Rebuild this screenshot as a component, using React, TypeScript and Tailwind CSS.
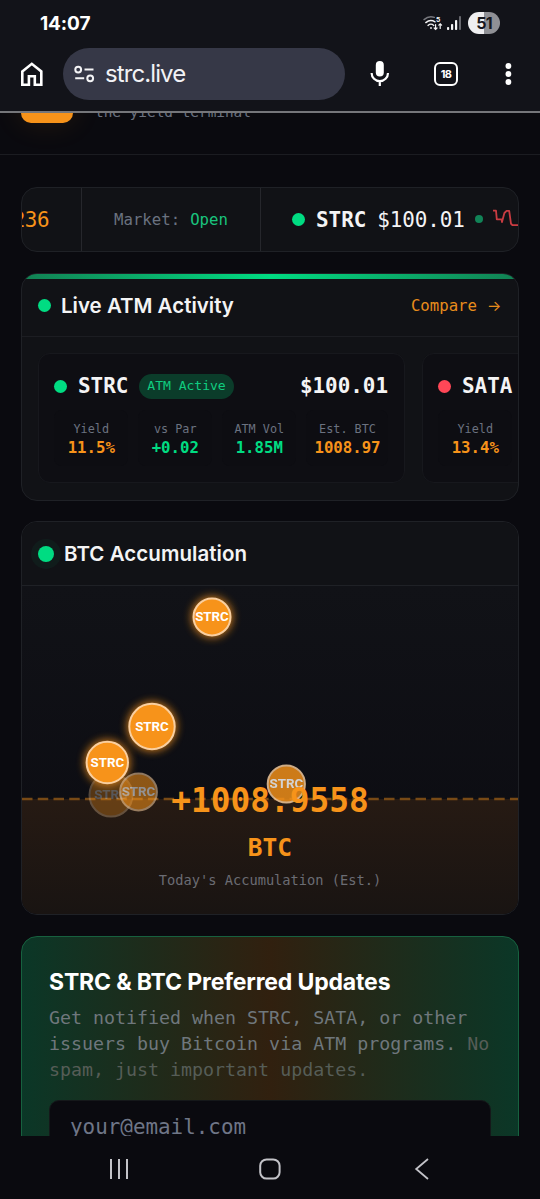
import type { ReactNode } from "react";
import { clsx } from "clsx";

const MONO = "font-['DejaVu_Sans_Mono','Liberation_Mono',monospace]";
const DISPLAY = "font-['Inter','Liberation_Sans',sans-serif]";

type Stat = { label: string; value: string; tone: "orange" | "green" };

const strcStats: Stat[] = [
  { label: "Yield", value: "11.5%", tone: "orange" },
  { label: "vs Par", value: "+0.02", tone: "green" },
  { label: "ATM Vol", value: "1.85M", tone: "green" },
  { label: "Est. BTC", value: "1008.97", tone: "orange" },
];

// only the first cell fits in the scroll area
const sataStats: Stat[] = [{ label: "Yield", value: "13.4%", tone: "orange" }];

// coordinates are relative to the chart area
const bubbles = [
  { x: 190, y: 31, r: 18.5, opacity: 1, glow: true },
  { x: 130, y: 140.5, r: 22.7, opacity: 1, glow: true },
  { x: 89, y: 209, r: 21.5, opacity: 0.3, glow: false },
  { x: 85.3, y: 176.5, r: 20.7, opacity: 1, glow: true },
  { x: 116.5, y: 206, r: 18.4, opacity: 0.55, glow: false },
  { x: 264.3, y: 198, r: 18.6, opacity: 0.82, glow: false },
];

function StatusBar() {
  return (
    <div className="flex h-[46px] items-center justify-between pl-10 pr-10 text-white">
      <span className="font-['Inter',sans-serif] text-[19px] font-bold leading-none tracking-[-0.1px]">
        14:07
      </span>
      <div className="flex items-center">
        <svg width="20" height="17" viewBox="0 0 20 17" fill="none" stroke="#f4f4f5" strokeWidth="1.4" strokeLinecap="round">
          <path d="M1 4.6C4 2 8 1.2 11.3 2.4" stroke="#77787e" />
          <path d="M2.8 7.6C5.6 5.2 9.2 5 12 6.8" />
          <path d="M5 10.4c1.8-1.6 4-1.6 5.8 0" />
          <circle cx="8" cy="13" r="0.9" fill="#f4f4f5" stroke="none" />
          <path d="M12.6 9.5v4.8M11.2 13l1.4 1.4L14 13M17.2 13.4V8.8M15.8 10.2l1.4-1.4 1.4 1.4" strokeWidth="1.2" />
          <text x="13" y="6.8" fill="#f4f4f5" stroke="none" fontSize="7.5" fontWeight="700" fontFamily="Roboto">5</text>
        </svg>
        <svg className="ml-1" width="15" height="16" viewBox="0 0 15 16">
          <rect x="0" y="12" width="2.2" height="3" rx="0.8" fill="#f4f4f5" />
          <rect x="4" y="9" width="2.2" height="6" rx="0.8" fill="#f4f4f5" />
          <rect x="8" y="5" width="2.2" height="10" rx="0.8" fill="#f4f4f5" />
          <rect x="12" y="1" width="2" height="14" rx="0.8" fill="#66676d" />
        </svg>
        <div className="ml-[6px] flex h-[22px] w-8 items-center justify-center rounded-full bg-[linear-gradient(90deg,#efeff1_51%,#8f9095_51%)] font-['Inter',sans-serif] text-[16px] font-bold tracking-[-0.8px] text-[#17181d]">
          51
        </div>
      </div>
    </div>
  );
}

function BrowserBar() {
  return (
    <div className="flex h-[65px] items-start pt-0.5 text-white">
      <svg className="ml-5 mt-3.5" width="24" height="26" viewBox="0 0 24 26" fill="none" stroke="currentColor" strokeWidth="2.6">
        <path d="M2.3 9.4 11.8 1.8 21.3 9.4v13.4h-6.5v-8.6H8.9v8.6H2.3z" />
      </svg>
      <div className="ml-[19px] flex h-[52px] w-[282px] items-center rounded-full bg-[#363847] pl-[11px]">
        <svg width="21" height="18" viewBox="0 0 21 18" fill="none" stroke="#f4f4f6" strokeWidth="2">
          <circle cx="4.2" cy="4.6" r="2.9" />
          <path d="M10.5 4.6h9M1.2 13.3h9" />
          <circle cx="16.2" cy="13.3" r="2.9" />
        </svg>
        <span className="ml-[10px] font-['Inter',sans-serif] text-[24px] leading-none tracking-[-0.9px] text-[#f2f2f5]">
          strc.live
        </span>
      </div>
      <svg className="ml-[25px] mt-[12px]" width="20" height="28" viewBox="0 0 20 28" fill="none">
        <rect x="5.8" y="1" width="8" height="15.6" rx="4" fill="currentColor" />
        <path d="M1.6 13a8.2 8.2 0 0 0 16.4 0M9.8 21v5" stroke="currentColor" strokeWidth="2.2" />
      </svg>
      <div className="ml-[44px] mt-3.5 flex h-[24px] w-6 items-center justify-center rounded-[6px] border-[2.4px] border-white font-['Inter',sans-serif] text-[11px] font-bold leading-none tracking-[-0.6px]">
        18
      </div>
      <svg className="ml-[47px] mt-[14px]" width="7" height="24" viewBox="0 0 7 24" fill="currentColor">
        <circle cx="3.4" cy="4" r="2.9" />
        <circle cx="3.4" cy="12" r="2.9" />
        <circle cx="3.4" cy="20" r="2.9" />
      </svg>
    </div>
  );
}

function SiteHeader() {
  return (
    <div className="flex h-[42px] shrink-0 overflow-hidden border-b border-[#1b1c21]">
      <div className="-mt-10 ml-[21px] h-[50px] w-[52px] rounded-[10px] bg-[#f7931a] shadow-[0_0_30px_rgba(247,147,26,0.12)]" />
      <span className="-mt-[11px] ml-[22px] text-[14.4px] leading-[20px] text-[#6b7280]">
        the yield terminal
      </span>
    </div>
  );
}

function Ticker() {
  return (
    <div className="mt-8 flex h-[65px] shrink-0 items-center overflow-hidden rounded-[16px] border border-[#1f2126] bg-[#111216] text-[20.9px]">
      <div className="flex h-full w-[60px] shrink-0 items-center justify-end border-r border-[#26272c] pr-[32px] pt-0.5 tracking-[-0.5px] text-[#f7931a]">
        236
      </div>
      <div className="flex h-full w-[179px] shrink-0 items-center border-r border-[#26272c] pl-[32px] text-[15.7px]">
        <span className="text-[#6b7280]">Market:</span>
        <span className="ml-[10px] text-[#19c37d]">Open</span>
      </div>
      <div className="flex shrink-0 items-center pl-[31px] text-[#f4f4f5]">
        <span className="size-[13px] rounded-full bg-[#00dc82]" />
        <span className="ml-[11px] pt-0.5 font-bold">STRC</span>
        <span className="ml-[11px] pt-0.5 tracking-[-0.1px]">$100.01</span>
        <span className="ml-[10px] size-2 rounded-full bg-[#118357]" />
        <svg className="ml-[9px]" width="60" height="24" viewBox="0 0 60 24" fill="none" stroke="#c93c42" strokeWidth="1.8" strokeLinejoin="round">
          <path d="M1 3.7h3l.8 8.6h4.8l.4 2.7 2.4-9 2.2-2.2h2.6l1.8 13 1.6 1.4h9l4-9h8" />
        </svg>
      </div>
    </div>
  );
}

function StatCell({ label, value, tone }: Stat) {
  return (
    <div className="flex h-[56px] flex-col items-center rounded-[8px] bg-[#0d0d12] pl-px pt-[11px]">
      <span className="whitespace-nowrap text-[11.8px] leading-[16px] text-[#6b7280]">{label}</span>
      <span
        className={clsx(
          "text-[15.7px] font-bold leading-[21px]",
          tone === "orange" ? "text-[#f7931a]" : "text-[#00dc82]"
        )}
      >
        {value}
      </span>
    </div>
  );
}

type IssuerCardProps = { ticker: string; price?: string; active?: boolean; stats: Stat[] };

function IssuerCard({ ticker, price, active, stats }: IssuerCardProps) {
  return (
    <div className="h-[130px] w-[367px] shrink-0 rounded-[12px] border border-[#17181d] bg-[#0e0e13] pl-[15px] pr-4 pt-[18px]">
      <div className="flex h-[28px] items-center text-[20.9px] font-bold text-[#f4f4f5]">
        <span className={clsx("size-[13px] rounded-full", active ? "bg-[#00dc82]" : "bg-[#ff4757]")} />
        <span className="ml-[11px] pt-0.5">{ticker}</span>
        {active && (
          <span className="ml-[11px] flex h-[25px] items-center rounded-full bg-[#0b3c2a] px-2 text-[13.1px] font-normal tracking-[-0.05px] text-[#10cd80]">
            ATM Active
          </span>
        )}
        <span className="ml-auto pt-0.5">{price}</span>
      </div>
      <div className="mt-[10px] grid grid-cols-[73.5px_73.5px_73.5px_1fr] gap-[10.5px]">
        {stats.map((stat) => (
          <StatCell key={stat.label} {...stat} />
        ))}
      </div>
    </div>
  );
}

function LiveActivity() {
  return (
    <section className="mt-[21px] h-[228px] shrink-0 overflow-hidden rounded-[16px] border border-[#1f2126] bg-[#111216]">
      <div className="h-[5px] bg-[linear-gradient(90deg,#128053,#00dc82_50%,#128053)]" />
      <div className="flex h-[58px] items-center border-b border-[#1c1d22] px-4 pb-1">
        <span className="size-[13px] rounded-full bg-[#00dc82]" />
        <h2 className={clsx(DISPLAY, "ml-[10px] pt-0.5 text-[20.5px] font-semibold text-[#f4f4f5]")}>
          Live ATM Activity
        </h2>
        <a className="ml-auto flex items-center text-[15.7px] text-[#e88c1c]">
          Compare
          <span className="ml-[10px] w-[15px] pt-0.5 font-['Inter',sans-serif] text-[15px]">→</span>
        </a>
      </div>
      <div className="flex gap-[17px] pl-4 pt-4">
        <IssuerCard ticker="STRC" price="$100.01" active stats={strcStats} />
        <IssuerCard ticker="SATA" stats={sataStats} />
      </div>
    </section>
  );
}

function Accumulation() {
  return (
    <section className="mt-[20px] h-[394px] shrink-0 overflow-hidden rounded-[16px] border border-[#1f2126] bg-[#0f0f14]">
      <div className="flex h-[64px] items-center border-b border-[#1f2126] bg-[#111216] px-4">
        <span className="size-4 rounded-full bg-[#00dc82] shadow-[0_0_0_7px_rgba(0,220,130,0.05)]" />
        <h2 className={clsx(DISPLAY, "ml-[10px] pt-0.5 text-[20.5px] font-semibold tracking-[0.05px] text-[#f4f4f5]")}>
          BTC Accumulation
        </h2>
      </div>
      <div className="relative h-[328px] bg-[linear-gradient(#111217,#0b0b11)]">
        <svg className="absolute inset-0" width="496" height="328" viewBox="0 0 496 328">
          <defs>
            <linearGradient id="pool" x1="0" y1="0" x2="0" y2="1">
              <stop offset="0" stopColor="#261a13" />
              <stop offset="1" stopColor="#191412" />
            </linearGradient>
            <filter id="glow" x="-50%" y="-50%" width="200%" height="200%">
              <feGaussianBlur stdDeviation="4" />
            </filter>
          </defs>
          <rect y="213" width="496" height="115" fill="url(#pool)" />
          <path d="M0 213h496" stroke="#784a16" strokeWidth="2.6" strokeDasharray="10.5 5.24" />
          {bubbles.map((b) => (
            <g key={b.x} opacity={b.opacity}>
              {b.glow && <circle cx={b.x} cy={b.y} r={b.r + 2} fill="#f7931a" opacity="0.8" filter="url(#glow)" />}
              <circle cx={b.x} cy={b.y} r={b.r} fill="#f7931a" stroke="#f9cfa0" strokeWidth="2" />
              <text x={b.x} y={b.y + 4} fill="#fff" textAnchor="middle" fontFamily="Roboto" fontWeight="700" fontSize="13.3">
                STRC
              </text>
            </g>
          ))}
        </svg>
        <div className="relative flex flex-col items-center pt-[192px]">
          <span className="text-[32.8px] font-bold leading-[46px] text-[#f7931a]">+1008.9558</span>
          <span className="text-[24.5px] font-bold leading-[48px] text-[#f7931a]">BTC</span>
          <span className="-mt-0.5 text-[13.7px] leading-[20px] text-[#6b6c73]">Today's Accumulation (Est.)</span>
        </div>
      </div>
    </section>
  );
}

function Updates() {
  return (
    <section className="mt-[21px] h-[260px] shrink-0 rounded-[16px] border border-[#17613f] bg-[linear-gradient(90deg,#0b3727,#31200f_50%,#0b3727)] px-[27px] pt-[29px]">
      <h2 className={clsx(DISPLAY, "text-[23px] font-bold leading-[33px] tracking-[-0.15px] text-white")}>
        STRC &amp; BTC Preferred Updates
      </h2>
      <p className="mt-1.5 whitespace-nowrap text-[18.3px] leading-[26.2px] text-[#6f777c]">
        Get notified when STRC, SATA, or other
        <br />
        issuers buy Bitcoin via ATM programs. <span className="text-[#565d57]">No</span>
        <br />
        <span className="text-[#565d57]">spam, just important updates.</span>
      </p>
      <div className="mt-4 h-[60px] rounded-[10px] border border-[#15181a] bg-[#0a0a0f] pl-5 pt-3 text-[20.9px] leading-[28px] text-[#6f7687]">
        your@email.com
      </div>
    </section>
  );
}

function NavButton({ children }: { children: ReactNode }) {
  return <button className="flex size-8 items-center justify-center text-[#c3c3c8]">{children}</button>;
}

function SystemNav() {
  return (
    <div className="flex h-[63px] shrink-0 items-center justify-between bg-[#0a0a0f] pl-[103px] pr-[103px] pt-0.5">
      <NavButton>
        <svg width="22" height="22" viewBox="0 0 22 22" stroke="currentColor" strokeWidth="2">
          <path d="M3 1v20M11 1v20M19 1v20" />
        </svg>
      </NavButton>
      <NavButton>
        <svg width="22" height="22" viewBox="0 0 22 22" fill="none" stroke="currentColor" strokeWidth="2">
          <rect x="1.2" y="1.4" width="19.4" height="19.2" rx="6.4" />
        </svg>
      </NavButton>
      <NavButton>
        <svg width="22" height="22" viewBox="0 0 22 22" fill="none" stroke="currentColor" strokeWidth="1.8">
          <path d="M18 1 6.2 11 18 21" />
        </svg>
      </NavButton>
    </div>
  );
}

export default function App() {
  return (
    <div className={clsx(MONO, "flex h-[1199px] w-[540px] flex-col overflow-hidden bg-[#0a0a0f]")}>
      <div className="h-[113px] shrink-0 border-b-2 border-[#75767a] bg-[#121319]">
        <StatusBar />
        <BrowserBar />
      </div>
      <main className="flex min-h-0 flex-1 flex-col overflow-hidden">
        <SiteHeader />
        <div className="flex flex-col px-[21px]">
          <Ticker />
          <LiveActivity />
          <Accumulation />
          <Updates />
        </div>
      </main>
      <SystemNav />
    </div>
  );
}
